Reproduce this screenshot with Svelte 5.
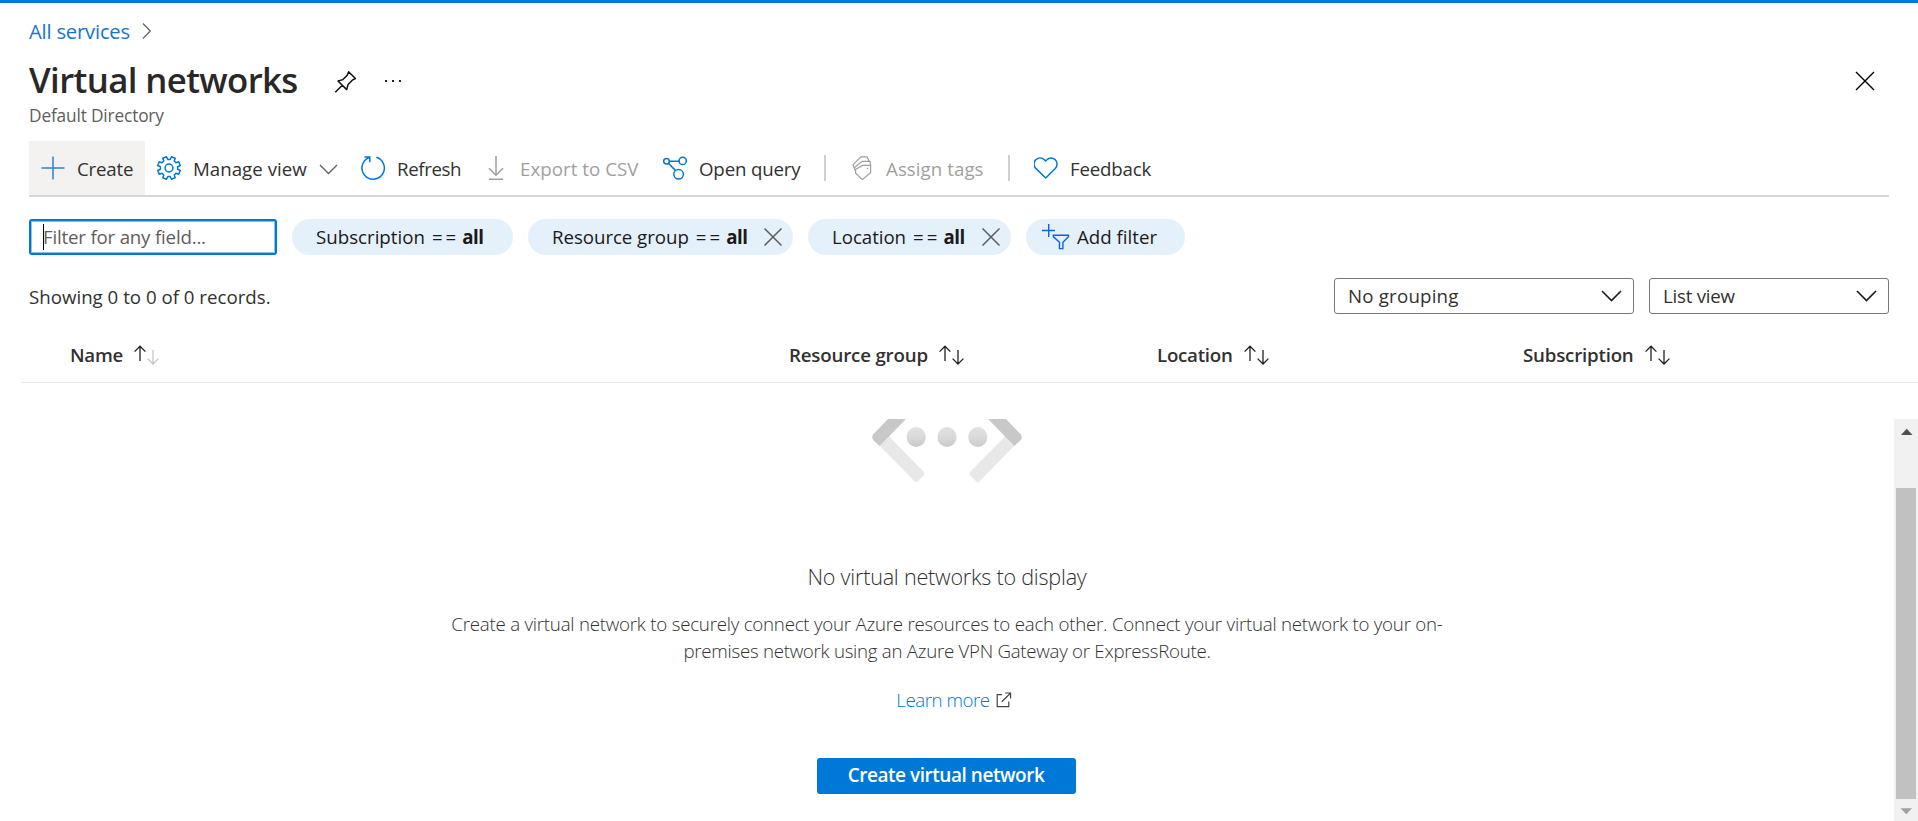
<script>
  const commands = [
    { id: 'create', label: 'Create', width: 116, ls: -0.19, active: true },
    { id: 'manage', label: 'Manage view', width: 204, ls: 0.02, menu: true },
    { id: 'refresh', label: 'Refresh', width: 123, ls: -0.39 },
    { id: 'export', label: 'Export to CSV', width: 179, ls: 0.04, disabled: true },
    { id: 'query', label: 'Open query', width: 173, ls: -0.17, divider: true },
    { id: 'tags', label: 'Assign tags', width: 170, ls: 0.06, disabled: true, divider: true },
    { id: 'feedback', label: 'Feedback', width: 140, ls: -0.2 }
  ];
  const pills = [
    { label: 'Subscription', width: 221, ls: 0 },
    { label: 'Resource group', width: 265, ls: -0.05, removable: true },
    { label: 'Location', width: 203, ls: -0.05, removable: true }
  ];
  const columns = [
    { label: 'Name', width: 719, ls: -0.27, sorted: true },
    { label: 'Resource group', width: 368, ls: -0.18 },
    { label: 'Location', width: 366, ls: -0.24 },
    { label: 'Subscription', width: 300, ls: -0.2 }
  ];
  const selects = [
    { label: 'No grouping', width: 300, ls: 0.2 },
    { label: 'List view', width: 240, ls: -0.24 }
  ];

  // Eight-toothed cog outline centred on 12,12.
  function cog() {
    const out = [];
    for (let i = 0; i < 8; i++) {
      const a = i * 45 + 22.5;
      for (const [r, d] of [[8.7, -14.5], [11.5, -10], [11.5, 10], [8.7, 14.5]]) {
        const t = ((a + d) * Math.PI) / 180;
        out.push(`${(12 + r * Math.cos(t)).toFixed(2)} ${(12 + r * Math.sin(t)).toFixed(2)}`);
      }
    }
    return `M${out.join('L')}Z`;
  }
</script>

<div class="page">
  <div class="accent"></div>

  <nav class="crumb">
    <a href="#services">All services</a>
    <svg width="10" height="18" viewBox="0 0 10 18"><path d="M1 1.5 8.3 9 1 16.5" fill="none" stroke="#605e5c" stroke-width="1.2" /></svg>
  </nav>

  <header class="title">
    <h1>Virtual networks</h1>
    <svg class="pin" width="24" height="24" viewBox="0 0 24 24" fill="none" stroke="#111" stroke-width="1.5" stroke-linejoin="round">
      <path d="M14.6 1.7 21.4 8.5 18.3 10.2 14 14.6 12.7 19.6 4 11 9 9.6 13.2 5.2ZM8.3 15.3 1.3 22.2" />
    </svg>
    <svg class="more" width="18" height="4" viewBox="0 0 18 4" fill="#222"><path d="M1 1h2v2H1zM8 1h2v2H8zM15 1h2v2h-2z" /></svg>
    <svg class="close" width="20" height="20" viewBox="0 0 20 20"><path d="M1 1 19 19M19 1 1 19" stroke="#000" stroke-width="1.4" /></svg>
  </header>
  <div class="subtitle">Default Directory</div>

  <div class="toolbar">
    {#each commands as c}
      <button class="cmd" class:active={c.active} class:disabled={c.disabled} style="width:{c.width}px">
        <svg width="24" height="24" viewBox="0 0 24 24" fill="none" stroke="currentColor" stroke-width="1.5">
          {#if c.id === 'create'}
            <path d="M12 .5v23M.5 12h23" stroke="#2f80cf" />
          {:else if c.id === 'manage'}
            <path d={cog()} stroke-linejoin="round" /><circle cx="12" cy="12" r="3.9" />
          {:else if c.id === 'refresh'}
            <path d="M15.3 1.3A11.2 11.2 0 1 1 8.1 1.6M3.4 .9H8.8V6.3" />
          {:else if c.id === 'export'}
            <path d="M12 0v18.4M5 12.2l7 7 7-7M5 23.2h14" />
          {:else if c.id === 'query'}
            <circle cx="3.5" cy="5.2" r="2.8" /><circle cx="19.7" cy="4.9" r="3.6" /><circle cx="15.6" cy="18.3" r="4.8" />
            <path d="M6.3 5.2h9.8M5.4 7.3l7.2 7.3" />
          {:else if c.id === 'tags'}
            <g stroke-width="1.2">
              <path d="M5.6 13.400 12.400 9.400h8.200v7.200l-8.400 7-6.600-6.400z" />
              <path d="M5.600 15.200 4.200 11.800 12.200 5.400h7.800l.6 3.800" />
              <path d="M4.200 11.800 3 8.600 11 .8h6l2.200 4.400" />
              <path d="M16.800 11.800h1.300v1.300h-1.300z" fill="currentColor" stroke="none" />
            </g>
          {:else}
            <path transform="translate(-.6 0)" d="M12.300 22 2.400 12.400C-.2 9.700.3 5.800 2.400 3.700 5 1.200 8.600 1.500 11 3.800L12.300 5l1.200-1.200c2.200-2.300 5.800-2.600 8.400-.1 2.100 2.100 2.600 6 0 8.700z" />
          {/if}
        </svg>
        <span style="letter-spacing:{c.ls}px">{c.label}</span>
        {#if c.menu}
          <svg class="caret" width="19" height="11" viewBox="0 0 19 11"><path d="M1 1 9.5 9.5 18 1" fill="none" stroke="#605e5c" stroke-width="1.3" /></svg>
        {/if}
      </button>
      {#if c.divider}<i class="divider"></i>{/if}
    {/each}
  </div>

  <div class="filters">
    <div class="field"><i></i><span>Filter for any field...</span></div>
    {#each pills as p}
      <div class="pill" style="width:{p.width}px">
        <span style="letter-spacing:{p.ls}px">{p.label}</span><span class="eq">==</span><b>all</b>
        {#if p.removable}
          <svg width="18" height="18" viewBox="0 0 18 18"><path d="M.5 .5 17.5 17.5M17.5 .5 .5 17.5" stroke="#5c5c5c" stroke-width="1.5" /></svg>
        {/if}
      </div>
    {/each}
    <div class="pill add">
      <svg width="28" height="26" viewBox="0 0 28 26" fill="none" stroke="#0f62de" stroke-width="1.4">
        <path d="M6.7 0v13M0 6.5h13M11.3 11.2h15.2v1.6l-5.6 5.4v6.4h-3.4v-6.400l-6.200-5.600z" />
      </svg>
      <span>Add filter</span>
    </div>
  </div>

  <div class="summary">
    <span>Showing 0 to 0 of 0 records.</span>
    <div class="selects">
      {#each selects as s}
        <div class="select" style="width:{s.width}px">
          <span style="letter-spacing:{s.ls}px">{s.label}</span>
          <svg width="21" height="12" viewBox="0 0 21 12"><path d="M1 1 10.5 10.5 20 1" fill="none" stroke="#1b1a19" stroke-width="1.6" /></svg>
        </div>
      {/each}
    </div>
  </div>

  <div class="columns">
    {#each columns as c}
      <div class="col" style="width:{c.width}px">
        <span style="letter-spacing:{c.ls}px">{c.label}</span>
        <svg width="25" height="20" viewBox="0 0 25 20" fill="none" stroke="#222" stroke-width="1.3">
          <path d="M6 16V1.5M.6 6.6 6 1.2l5.4 5.4" />
          <path d="M19 5v13.8M13.6 13.6 19 19l5.4-5.4" stroke={c.sorted ? '#c4c4c4' : '#222'} />
        </svg>
      </div>
    {/each}
  </div>

  <div class="body">
    <main class="empty">
      <svg width="152" height="64" viewBox="0 0 152 64">
        <defs>
          <linearGradient id="dot" x1="0" y1="0" x2="0" y2="1"><stop offset="0" stop-color="#e2e2e2" /><stop offset=".5" stop-color="#dadada" /><stop offset="1" stop-color="#c9c9c9" /></linearGradient>
          <g id="half">
            <path d="M8 26 17.5 17 52.5 52.5Q54 54.5 52.5 56.5L47 62.3Q45.2 64 43.5 62.3Z" fill="#e8e8e8" />
            <path d="M17 0H35L8.5 27 2.3 21Q.2 18.3 2.3 15.3Z" fill="#c8c8c8" />
          </g>
        </defs>
        <use href="#half" /><use href="#half" transform="translate(152 0) scale(-1 1)" />
        <g fill="url(#dot)"><ellipse cx="45.2" cy="18" rx="9.6" ry="10" /><ellipse cx="76" cy="18" rx="9.6" ry="10" /><ellipse cx="106.8" cy="18" rx="9.6" ry="10" /></g>
      </svg>
      <h2>No virtual networks to display</h2>
      <p><span>Create a virtual network to securely connect your Azure resources to each other. Connect your virtual network to your on-</span><span class="second">premises network using an Azure VPN Gateway or ExpressRoute.</span></p>
      <a class="learn" href="#learn">Learn more
        <svg width="16" height="16" viewBox="0 0 16 16" fill="none" stroke="#444" stroke-width="1.2"><path d="M6 2.7H1.2v12h11.6V9.5M5.8 9.7 14.4 1.2M9.2 1h5.4v5.4" /></svg>
      </a>
      <button class="primary">Create virtual network</button>
    </main>
    <div class="scrollbar">
      <svg width="24" height="24" viewBox="0 0 24 24"><path d="M7 16h11.5L12.7 9.8z" fill="#505050" /></svg>
      <div class="thumb"></div>
      <svg width="24" height="22" viewBox="0 0 24 22"><path d="M6.5 9.2h11.5l-5.7 6z" fill="#a0a0a0" /></svg>
    </div>
  </div>
</div>

<style>
  :global(body) { background: #fff; overflow: hidden; }
  .page { height: 821px; display: flex; flex-direction: column; font: 18.7px/27px 'Open Sans', sans-serif; color: #323130; white-space: nowrap; overflow: hidden; }
  .page > * { flex: none; }
  svg { display: block; flex: none; }
  a { text-decoration: none; }
  button { font: inherit; color: inherit; border: 0; background: none; padding: 0; }
  .accent { height: 3px; background: #0078d4; }
  .crumb { height: 56px; padding-left: 29px; display: flex; align-items: center; gap: 12px; }
  .crumb a { font-size: 20.2px; letter-spacing: -.19px; color: #1a73d0; }
  .title { height: 40px; padding: 0 43px 0 29px; display: flex; align-items: center; color: #292827; }
  h1 { margin: 2px 0 0; font-size: 34.8px; line-height: 40px; font-weight: 600; letter-spacing: -.62px; width: 305px; }
  .pin { margin-top: 5px; }
  .more { margin: 4px 0 0 26px; }
  .close { margin: 4px 0 0 auto; }
  .subtitle { height: 30px; line-height: 30px; padding: 2px 0 0 29px; font-size: 17.3px; letter-spacing: -.16px; color: #605e5c; }
  .toolbar { margin: 10px 29px 0; height: 54px; display: flex; align-items: center; border-bottom: 2px solid #d8d7d6; }
  .cmd { height: 54px; padding-left: 12px; display: flex; align-items: center; gap: 12px; box-sizing: border-box; }
  .cmd > svg { color: #0078d4; }
  .active { background: #f3f2f1; }
  .disabled, .disabled > svg { color: #a19f9d; }
  .cmd > .caret { margin: 3px 0 0 0; }
  .divider { width: 2px; height: 26px; margin-right: 12px; background: #d2d0ce; }
  .filters { margin: 22px 29px 0; height: 36px; display: flex; gap: 15px; color: #1b1a19; }
  .filters span, .filters b, .select span { padding-bottom: 2px; }
  .field { width: 248px; box-sizing: border-box; border: 2px solid #0078d4; border-radius: 3px; display: flex; align-items: center; box-shadow: inset 0 0 0 1px #8cc3ee; padding-left: 12px; color: #605e5c; letter-spacing: -.19px; }
  .field i { width: 1px; height: 26px; margin-right: -1px; background: #000; }
  .pill { box-sizing: border-box; border-radius: 18px; background: #e4f1fb; display: flex; align-items: center; padding: 0 11px 0 24px; }
  .eq { margin-left: 7px; letter-spacing: 3px; }
  .pill b { margin-left: 3px; letter-spacing: -.5px; }
  .pill > svg:last-child { margin-left: auto; }
  .add { width: 159px; padding-left: 16px; gap: 7px; }
  .summary { margin: 23px 29px 0; height: 36px; display: flex; align-items: center; justify-content: space-between; }
  .selects { display: flex; gap: 15px; }
  .select { height: 36px; box-sizing: border-box; border: 1px solid #7a7877; border-radius: 3px; padding: 0 11px 0 13px; display: flex; align-items: center; justify-content: space-between; }
  .columns { margin: 14px 0 0 22px; padding-left: 48px; height: 54px; display: flex; border-bottom: 1px solid #e8e7e6; font-weight: 600; }
  .col { display: flex; align-items: center; gap: 11px; }
  .col span { padding-bottom: 2px; }
  .body { margin-top: 36px; height: 402px; display: flex; }
  .empty { flex: 1; display: flex; flex-direction: column; align-items: center; font-weight: 300; color: #323130; }
  h2 { margin: 79px 0 0; font-size: 21.6px; line-height: 30px; font-weight: 300; letter-spacing: -.23px; }
  p { margin: 18px 0 0; text-align: center; letter-spacing: -.23px; }
  p span { display: block; }
  .second { letter-spacing: -.27px; }
  .learn { margin: 22px 0 0 14px; display: flex; align-items: center; gap: 6px; letter-spacing: -.45px; color: #0078d4; }
  .primary { margin: 45px 2px 0 0; padding-bottom: 2px; width: 259px; height: 36px; border-radius: 3px; background: #0078d7; color: #fff; font-weight: 600; font-size: 19px; letter-spacing: -.46px; }
  .scrollbar { width: 24px; background: #f1f1f1; display: flex; flex-direction: column; justify-content: space-between; }
  .thumb { margin: 45px 2px 0; flex: none; height: 311px; background: #c1c1c1; }
</style>
